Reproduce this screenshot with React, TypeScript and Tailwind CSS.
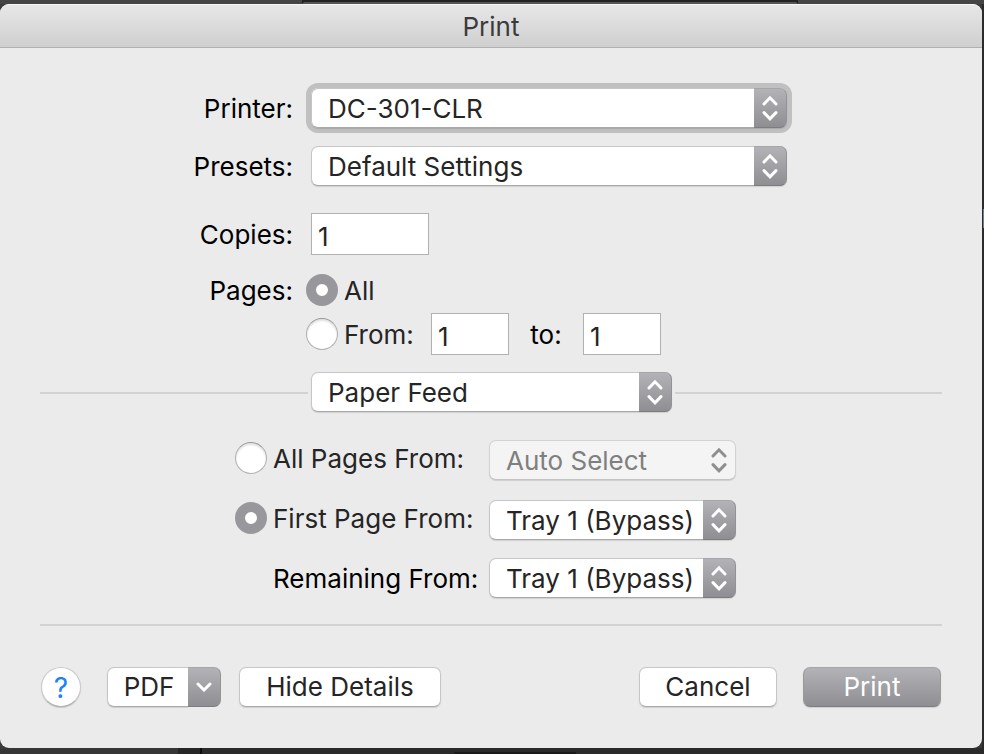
import { useId, useState } from "react";
import type { InputHTMLAttributes, ReactNode } from "react";

const edge =
  "border border-[#c6c6c6] border-b-[#a9a9a9] rounded-[7px] shadow-[0_1px_1px_rgba(0,0,0,0.12)]";
const cap =
  "pointer-events-none flex items-center justify-center rounded-r-[7px] border border-l-0 border-t-[#a6a6aa] border-r-[#939297] border-b-[#7d7c81] bg-linear-to-b from-[#b3b2b7] to-[#8f8e93]";

function UpDown({ className }: { className: string }) {
  return (
    <svg viewBox="0 0 16 26" className={`h-[26px] w-4 ${className}`} fill="none" stroke="currentColor" strokeWidth="3" strokeLinecap="round" strokeLinejoin="miter" aria-hidden="true">
      <path d="M2 9 8 2.8 14 9M2 17.6l6 6.2 6-6.2" />
    </svg>
  );
}

type PopupProps = {
  id?: string;
  label?: string;
  options: string[];
  className: string;
  focused?: boolean;
  disabled?: boolean;
};

function Popup({ id, label, options, className, focused, disabled }: PopupProps) {
  return (
    <div className={`relative h-10 ${className} ${focused ? "rounded-[7px] ring-5 ring-[#c0c0c1]" : ""}`}>
      <select
        id={id}
        aria-label={label}
        disabled={disabled}
        className={`h-full w-full appearance-none pt-0.5 pl-4 outline-none ${edge} ${
          disabled ? "border-[#d2d2d2] border-b-[#c4c4c4] bg-[#f4f4f4] text-[#7f7f7f] opacity-100" : "bg-white text-[#252525]"
        }`}
      >
        {options.map((o) => (
          <option key={o}>{o}</option>
        ))}
      </select>
      {disabled ? (
        <span className="pointer-events-none absolute inset-y-0 right-0 flex w-[33px] items-center justify-center pr-px">
          <UpDown className="text-[#8f8f8f]" />
        </span>
      ) : (
        <span className={`absolute inset-y-0 right-0 w-[33px] ${cap}`}>
          <UpDown className="text-white" />
        </span>
      )}
    </div>
  );
}

function Radio(props: InputHTMLAttributes<HTMLInputElement>) {
  return (
    <input
      type="radio"
      className="size-8 shrink-0 appearance-none rounded-full border border-[#b0b0b0] border-t-[#969696] bg-white shadow-[inset_0_2px_2px_rgba(0,0,0,0.12)] outline-none checked:border-10 checked:border-[#98979c] checked:shadow-[0_0_0_0_transparent]"
      {...props}
    />
  );
}

function NumberField({ id, label, className }: { id?: string; label?: string; className: string }) {
  return (
    <input
      id={id}
      aria-label={label}
      type="text"
      inputMode="numeric"
      defaultValue="1"
      className={`h-[42px] border border-[#b1b1b1] bg-white pt-1 pl-1.5 text-[#252525] outline-none ${className}`}
    />
  );
}

function FieldLabel({ htmlFor, children }: { htmlFor: string; children: ReactNode }) {
  return (
    <label htmlFor={htmlFor} className="w-[253px] shrink-0 pt-0.5 text-right text-black">
      {children}
    </label>
  );
}

function PushButton({ children, className }: { children: ReactNode; className: string }) {
  return (
    <button type="button" className={`h-10 ${className}`}>
      {children}
    </button>
  );
}

export default function App() {
  const id = useId();
  const [range, setRange] = useState("all");
  const [feed, setFeed] = useState("first");

  return (
    <div className="flex min-h-screen flex-col bg-[#3a3a3a] font-[Inter,'Liberation_Sans',sans-serif] text-[26px] leading-8">
      <div className="flex h-1 bg-[#444444]">
        <div className="ml-[302px] w-[496px] border-x-2 border-b-2 border-x-[#222222] border-b-[#555555] bg-[#222222]" />
      </div>

      <div className="flex flex-1">
        <main className="flex flex-1 flex-col overflow-hidden rounded-[9px] bg-[#ebebeb]">
          <header className="flex h-11 items-center justify-center border-t border-b border-t-[#f6f6f6] border-b-[#b0b0b0] bg-linear-to-b from-[#e7e7e7] to-[#cfcfcf]">
            <h1 className="pt-0.5 text-[#3b3b3b]">Print</h1>
          </header>

          <form className="flex flex-1 flex-col px-10 pt-10" onSubmit={(e) => e.preventDefault()}>
            <div className="flex items-center gap-[18px]">
              <FieldLabel htmlFor={`${id}-printer`}>Printer:</FieldLabel>
              <Popup id={`${id}-printer`} options={["DC-301-CLR"]} className="w-[476px]" focused />
            </div>
            <div className="mt-[18px] flex items-center gap-[18px]">
              <FieldLabel htmlFor={`${id}-presets`}>Presets:</FieldLabel>
              <Popup id={`${id}-presets`} options={["Default Settings"]} className="w-[476px]" />
            </div>
            <div className="mt-[27px] flex items-center gap-[18px]">
              <FieldLabel htmlFor={`${id}-copies`}>Copies:</FieldLabel>
              <NumberField id={`${id}-copies`} className="w-[118px]" />
            </div>

            <div role="radiogroup" aria-labelledby={`${id}-pages`} className="mt-[19px] flex gap-[13px]">
              <span id={`${id}-pages`} className="w-[253px] shrink-0 pt-px text-right text-black">
                Pages:
              </span>
              <div className="flex flex-col gap-[7px] text-[#252525]">
                <label className="flex h-8 items-center gap-1.5">
                  <Radio name="range" checked={range === "all"} onChange={() => setRange("all")} />
                  <span className="pt-0.5">All</span>
                </label>
                <div className="flex items-center">
                  <label className="flex h-8 w-[125px] items-center gap-1.5">
                    <Radio name="range" checked={range === "from"} onChange={() => setRange("from")} />
                    <span className="pt-0.5">From:</span>
                  </label>
                  <NumberField label="From page" className="w-[78px]" />
                  <label htmlFor={`${id}-to`} className="w-[74px] pt-0.5 text-center text-black">
                    to:
                  </label>
                  <NumberField id={`${id}-to`} className="w-[78px]" />
                </div>
              </div>
            </div>

            <div className="mt-[17px] flex items-center gap-[3px]">
              <div className="h-1 w-[268px] border-b-2 border-[#d2d2d2]" />
              <Popup label="Options section" options={["Paper Feed"]} className="w-[361px]" />
              <div className="h-1 flex-1 border-b-2 border-[#d2d2d2]" />
            </div>

            <div className="mt-7 ml-[195px] flex h-10 items-center">
              <label className="flex h-9 w-[254px] items-center gap-1.5 pb-1 text-[#252525]">
                <Radio name="feed" checked={feed === "all"} onChange={() => setFeed("all")} />
                <span className="pt-0.5 whitespace-nowrap">All Pages From:</span>
              </label>
              <Popup label="All pages tray" options={["Auto Select"]} className="w-[247px]" disabled={feed !== "all"} />
            </div>
            <div className="mt-5 ml-[195px] flex h-10 items-center">
              <label className="flex h-9 w-[254px] items-center gap-1.5 pb-1 text-[#252525]">
                <Radio name="feed" checked={feed === "first"} onChange={() => setFeed("first")} />
                <span className="pt-0.5 whitespace-nowrap">First Page From:</span>
              </label>
              <Popup label="First page tray" options={["Tray 1 (Bypass)"]} className="w-[247px]" />
            </div>
            <div className="mt-[18px] ml-[195px] flex h-10 items-center">
              <label htmlFor={`${id}-rest`} className="w-[254px] pt-0.5 pl-[38px] whitespace-nowrap text-black">
                Remaining From:
              </label>
              <Popup id={`${id}-rest`} options={["Tray 1 (Bypass)"]} className="w-[247px]" />
            </div>

            <hr className="mt-[26px] h-0.5 border-0 bg-[#d2d2d2]" />

            <div className="mt-[41px] mb-[41px] flex items-center px-px">
              <button
                type="button"
                aria-label="Help"
                className="flex size-10 items-center justify-center rounded-full border border-[#cacaca] border-b-[#b0b0b0] bg-white pt-0.5 text-[28px] text-[#1a82fb] shadow-[0_1px_1px_rgba(0,0,0,0.15)]"
              >
                ?
              </button>
              <button type="button" className="ml-[26px] flex h-10 w-[114px] text-[#252525]">
                <span className="flex h-full flex-1 items-center justify-center rounded-l-[7px] border border-r-0 border-[#c6c6c6] border-b-[#a9a9a9] bg-white pl-0.5 shadow-[0_1px_1px_rgba(0,0,0,0.12)]">
                  PDF
                </span>
                <span className={`h-full w-[33px] ${cap}`}>
                  <svg viewBox="0 0 16 10" className="h-2.5 w-4 text-white" fill="none" stroke="currentColor" strokeWidth="3" strokeLinecap="round" aria-hidden="true">
                    <path d="M2 2l6 6 6-6" />
                  </svg>
                </span>
              </button>
              <PushButton className={`ml-[18px] w-[202px] bg-white text-[#252525] ${edge}`}>Hide Details</PushButton>
              <div className="flex-1" />
              <PushButton className={`w-[138px] bg-white text-[#252525] ${edge}`}>Cancel</PushButton>
              <PushButton className="ml-[26px] w-[138px] rounded-[7px] border border-t-[#a6a6aa] border-r-[#99989d] border-b-[#7d7c81] border-l-[#99989d] bg-linear-to-b from-[#b3b2b7] to-[#8f8e93] text-white shadow-[0_1px_1px_rgba(0,0,0,0.12)]">
                Print
              </PushButton>
            </div>
          </form>
        </main>
        <div className="w-0.5 bg-[#2b2b2d] pt-[205px]">
          <div className="ml-px h-[19px] bg-[#6f7f93]" />
        </div>
      </div>

      <div className="flex h-1.5 bg-[#2a2a2b]">
        <div className="w-[178px] bg-[#363636]" />
        <div className="w-[22px] bg-[#262626]" />
        <div className="w-0.5 bg-[#0c0c0c]" />
        <div className="mt-1 ml-[252px] w-[122px] bg-[#1a1a1c]" />
      </div>
    </div>
  );
}
